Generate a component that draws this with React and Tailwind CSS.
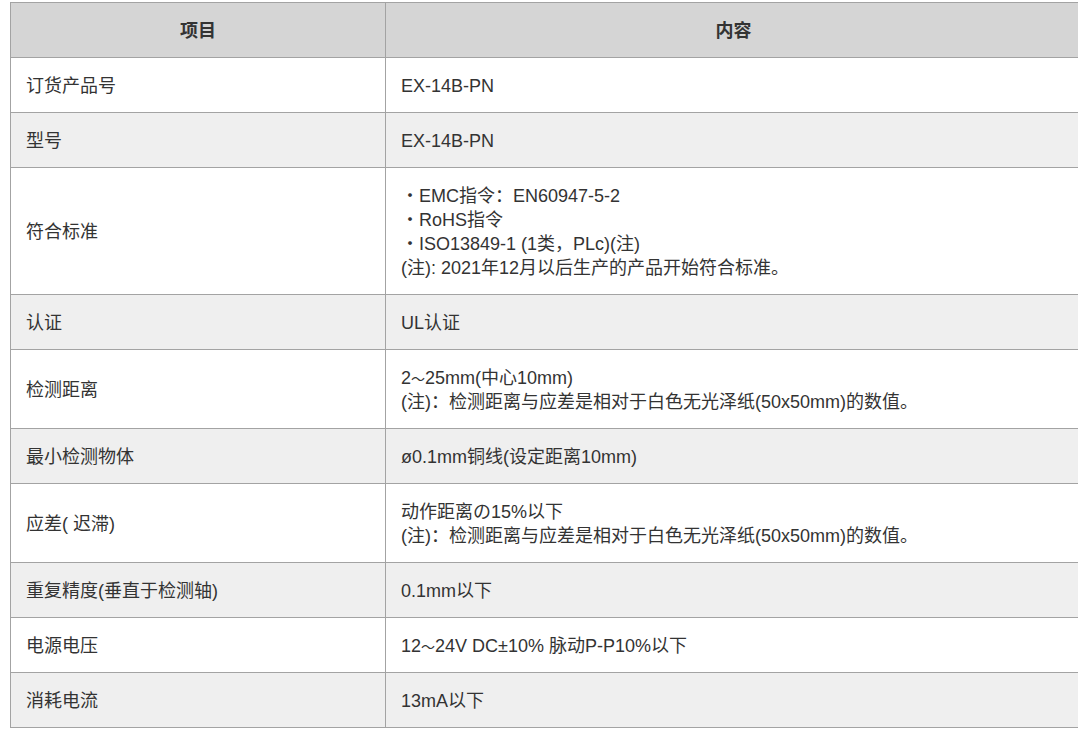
import React from 'react';

const Tilde = () => <span className="text-[14px] leading-none">～</span>;

const rows = [
  { label: '订货产品号', value: ['EX-14B-PN'] },
  { label: '型号', value: ['EX-14B-PN'] },
  {
    label: '符合标准',
    value: [
      '・EMC指令：EN60947-5-2',
      '・RoHS指令',
      '・ISO13849-1 (1类，PLc)(注)',
      '(注): 2021年12月以后生产的产品开始符合标准。'
    ]
  },
  { label: '认证', value: ['UL认证'] },
  {
    label: '检测距离',
    value: [
      <>2<Tilde />25mm(中心10mm)</>,
      '(注)：检测距离与应差是相对于白色无光泽纸(50x50mm)的数值。'
    ]
  },
  { label: '最小检测物体', value: ['ø0.1mm铜线(设定距离10mm)'] },
  {
    label: '应差( 迟滞)',
    value: ['动作距离の15%以下', '(注)：检测距离与应差是相对于白色无光泽纸(50x50mm)的数值。']
  },
  { label: '重复精度(垂直于检测轴)', value: ['0.1mm以下'] },
  { label: '电源电压', value: [<>12<Tilde />24V DC±10% 脉动P-P10%以下</>] },
  { label: '消耗电流', value: ['13mA以下'] }
];

const App = () => {
  return (
    <div
      className="w-full overflow-hidden bg-white pt-[2px] pl-[10px] text-[#333333]"
      style={{ fontFamily: '"Liberation Sans", Arial, "Noto Sans CJK SC", sans-serif' }}
    >
      <table className="w-[1072px] border-collapse text-[18px] leading-[24px]">
        <thead>
          <tr className="bg-[#d5d5d5]">
            <th className="w-[375px] border border-[#a3a3a3] pt-[16px] pb-[14px] text-center font-bold">项目</th>
            <th className="border border-[#a3a3a3] pt-[16px] pb-[14px] text-center font-bold">内容</th>
          </tr>
        </thead>
        <tbody>
          {rows.map((row, index) => (
            <tr key={index} className={index % 2 === 0 ? 'bg-white' : 'bg-[#efefef]'}>
              <td className="border border-[#a3a3a3] pt-[16px] pb-[14px] pl-[15px] text-left align-middle">{row.label}</td>
              <td className="border border-[#a3a3a3] pt-[16px] pb-[14px] pl-[15px] text-left align-middle">
                {row.value.map((line, i) => (
                  <div key={i} className="h-[24px]">{line}</div>
                ))}
              </td>
            </tr>
          ))}
        </tbody>
      </table>
    </div>
  );
};

export default App;
